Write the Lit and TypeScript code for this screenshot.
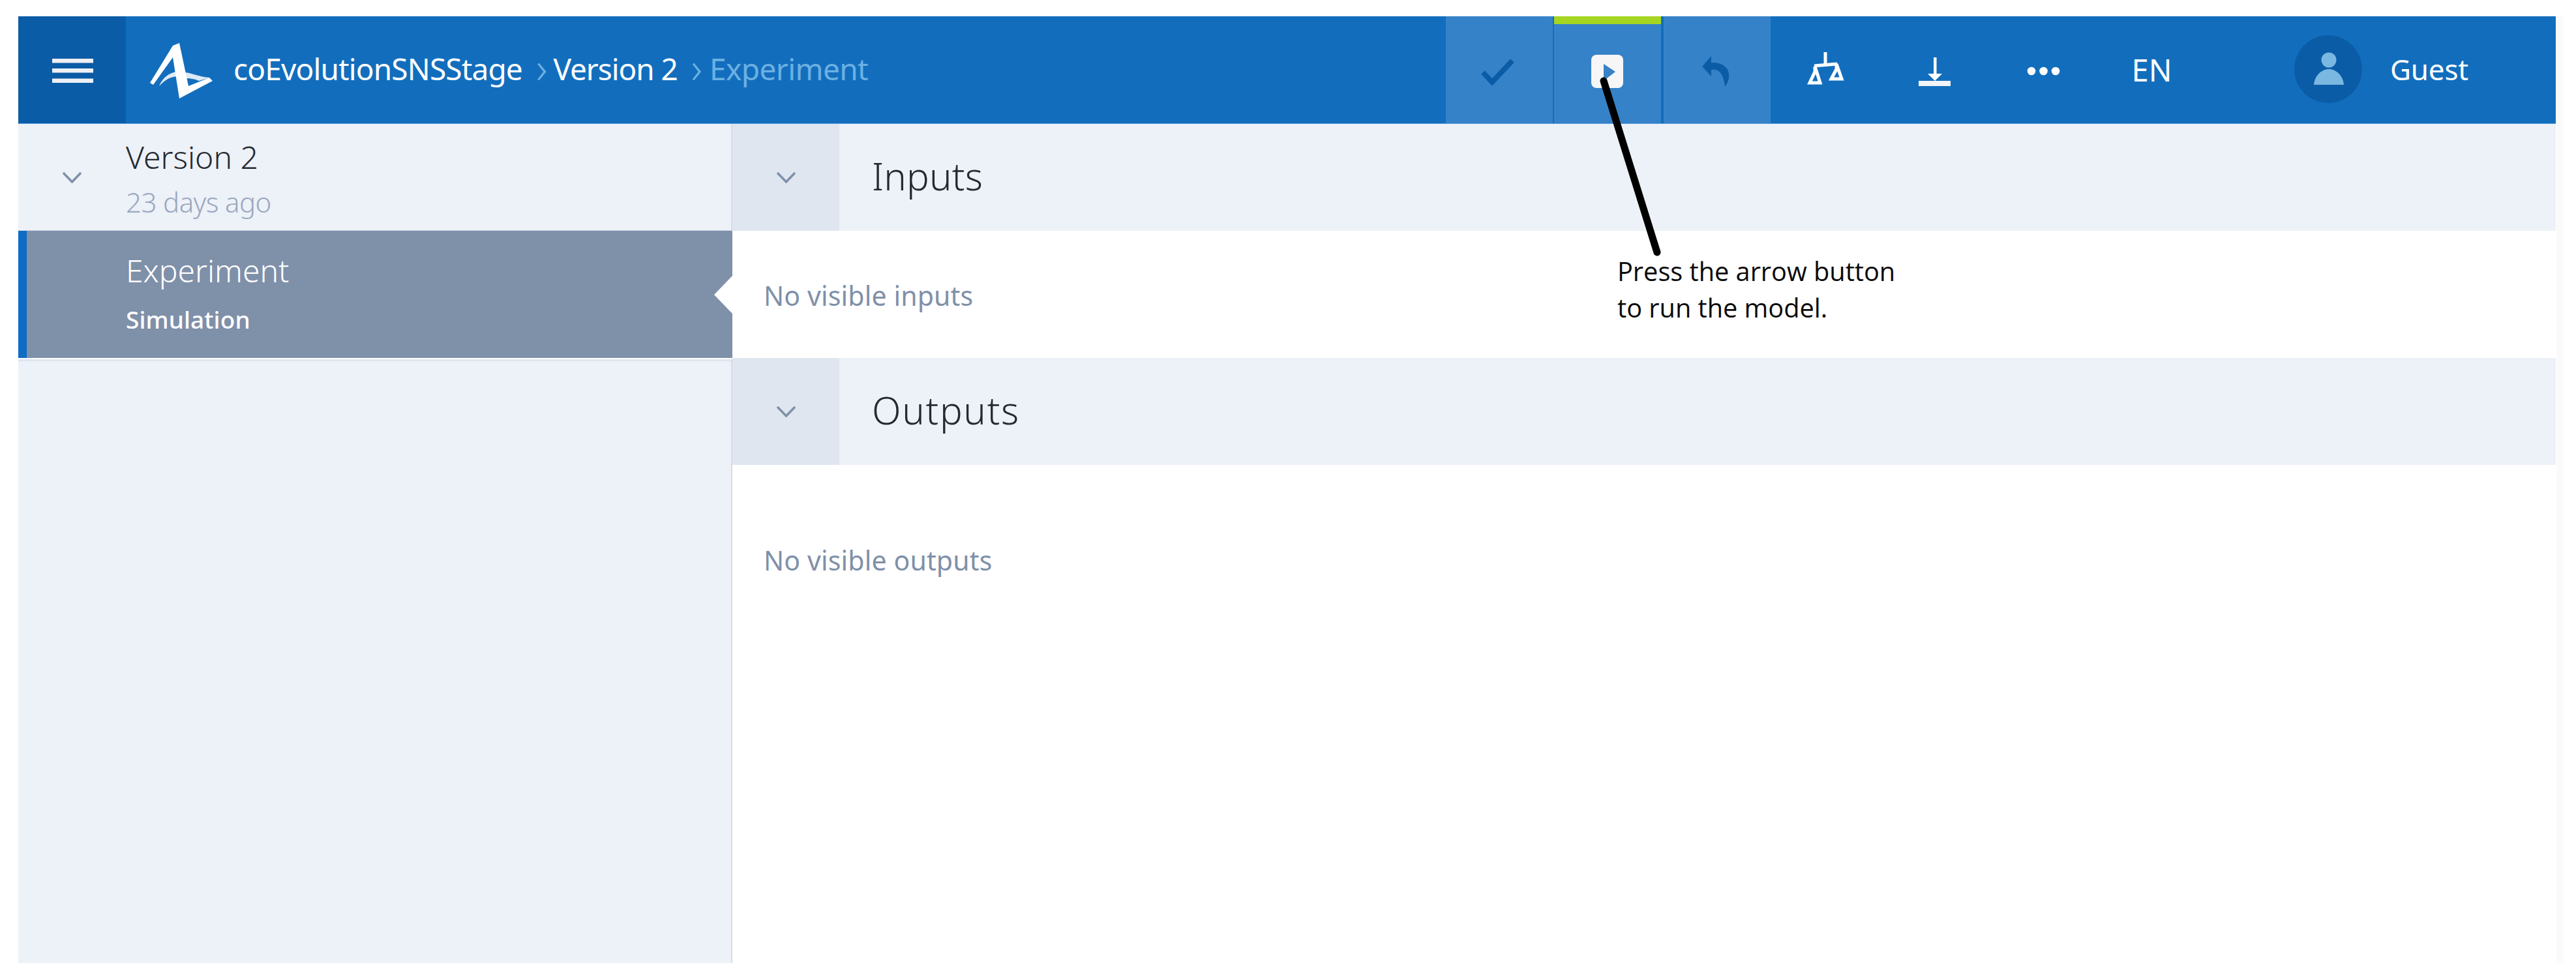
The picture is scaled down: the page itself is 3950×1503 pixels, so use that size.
import { LitElement, html, css, svg } from "lit";
import { customElement } from "lit/decorators.js";

const chevron = svg`<path d="M2 2 L15.5 16 L29 2" fill="none" stroke="#7f90a9" stroke-width="3.5"/>`;

@customElement("app-root")
export class AppRoot extends LitElement {
  static styles = css`
    :host {
      display: flex;
      box-sizing: border-box;
      width: 3950px;
      height: 1503px;
      padding: 25px 20px 26px 28px;
      background: #fff;
      font-family: "Noto Sans", sans-serif;
      position: relative;
      overflow: hidden;
    }
    .app { width: 3891px; display: flex; flex-direction: column; }
    .strip { width: 10px; margin-left: 1px; background: #fafafa; }
    .header {
      height: 165px; box-sizing: border-box; flex: none;
      background: #126ebd; border-bottom: 1px solid #4f97dc;
      display: flex; color: #fff;
    }
    .burger { width: 165px; background: #0b5ca6; flex: none; }
    .logo { width: 165px; flex: none; }
    .crumbs { display: flex; align-items: center; font-size: 46px; font-weight: 400; height: 160px; white-space: nowrap; }
    .app-name { letter-spacing: -0.85px; }
    .sep { color: #6cb0e2; font-size: 66px; line-height: 66px; margin: 0 9px 0 21px; font-weight: 300; padding-bottom: 6px; }
    .v { letter-spacing: -1.1px; }
    .cur { color: #6cb0e2; letter-spacing: -0.6px; margin-left: 2px; }
    .actions { margin-left: auto; display: flex; }
    .btn { width: 164px; flex: none; background: #3682c8; display: flex; }
    .btn.second { margin-left: 2px; box-shadow: inset 0 12px 0 #a6d521; }
    .btn.third { margin-left: 4px; }
    .tool { width: 167px; flex: none; display: flex; align-items: center; justify-content: center; }
    .tool svg, .btn svg { display: block; }
    .en { font-size: 47px; }
    .user { width: 536px; flex: none; display: flex; align-items: center; padding-left: 135px; box-sizing: border-box; padding-bottom: 2px; }
    .avatar { width: 104px; height: 104px; flex: none; }
    .guest { margin-left: 43px; font-size: 44px; letter-spacing: -0.2px; }
    .body { flex: 1; display: flex; min-height: 0; }
    .side { width: 1095px; flex: none; box-sizing: border-box; background: #edf1f8; border-right: 2px solid #d6dce6; }
    .ver { height: 164px; display: flex; box-sizing: border-box; border-bottom: 1px solid #ccd5e2; }
    .chev-slot { width: 165px; flex: none; display: flex; align-items: center; justify-content: center; }
    .chev-slot svg { display: block; }
    .ver-text { padding-top: 21px; }
    .ver-title { font-size: 48px; line-height: 60px; color: #262a30; letter-spacing: 0; font-weight: 300; }
    .ver-date { font-size: 42px; line-height: 56px; margin-top: 11px; color: #9aa8bf; font-weight: 300; letter-spacing: -0.6px; }
    .sel {
      height: 195px; box-sizing: border-box; background: #7f90a9; border-left: 13px solid #0f6cc4;
      color: #fff; padding: 31px 0 0 152px; margin-right: -2px; position: relative;
    }
    .sel-title { font-size: 48px; line-height: 60px; font-weight: 300; letter-spacing: 0; }
    .sel-sub { font-size: 37px; line-height: 50px; margin-top: 20px; font-weight: 500; letter-spacing: 0.1px; }
    .notch { position: absolute; right: 0; top: 69px; width: 28px; height: 58px; background: #fff; clip-path: polygon(100% 0, 0 50%, 100% 100%); }
    .after-sel { height: 2px; background: #fff; margin-right: -2px; }
    .after-line { height: 3px; background: #dfe5ef; }
    .main { flex: 1; min-width: 0; background: #fff; }
    .sec { height: 164px; display: flex; background: #edf1f8; box-sizing: border-box; }
    .sec-chev { width: 164px; flex: none; background: #dfe6ef; display: flex; align-items: center; justify-content: center; }
    .sec-title { margin-left: 50px; font-size: 58px; font-weight: 300; color: #262a30; align-self: center; padding-bottom: 6px; letter-spacing: 0.2px; }
    .sec-title.wide { letter-spacing: 1.7px; }
    .empty { font-size: 41px; color: #7f90a9; padding-left: 48px; letter-spacing: 0.15px; font-weight: 400; }
    .in { height: 195px; box-sizing: border-box; padding-top: 71px; line-height: 56px; }
    .out { padding-top: 118px; line-height: 56px; }
    .overlay { position: absolute; left: 0; top: 0; pointer-events: none; }
    .note {
      position: absolute; left: 2480px; top: 388px; color: #0a0a0a;
      font-family: "Open Sans", sans-serif; font-size: 39.7px; line-height: 56px; white-space: nowrap;
    }
  `;

  render() {
    return html`
      <div class="app">
        <div class="header">
          <div class="burger">
            <svg width="165" height="164" viewBox="28 25 165 164">
              <g fill="#eef0f4">
                <rect x="80" y="90" width="63" height="6.5"/>
                <rect x="80" y="105" width="63" height="6.5"/>
                <rect x="80" y="120.5" width="63" height="6.5"/>
              </g>
            </svg>
          </div>
          <div class="logo">
            <svg width="165" height="164" viewBox="193 25 165 164">
              <path d="M244 132 C249 120 259 111 272 110 L273 117 C262 117 252 123 244 132 Z" fill="#dce9f6"/>
              <path d="M283 111 C295 112 305 118 322 119 L305 124 C298 121 292 120 285 120 Z" fill="#dce9f6"/>
              <path d="M265 70 L275 66 L289 132 L321 119 L326 124 L275 151 L265 88 L235 130 L230 127 Z" fill="#fff"/>
            </svg>
          </div>
          <div class="crumbs">
            <span class="app-name">coEvolutionSNSStage</span>
            <span class="sep">›</span><span class="v">Version 2</span>
            <span class="sep">›</span><span class="cur">Experiment</span>
          </div>
          <div class="actions">
            <div class="btn">
              <svg width="164" height="164" viewBox="2216 25 164 164">
                <path d="M2273 111 L2287 126 L2318 93" fill="none" stroke="#0b5ca6" stroke-width="8"/>
              </svg>
            </div>
            <div class="btn second">
              <svg width="164" height="164" viewBox="2382 25 164 164">
                <rect x="2439" y="84" width="49" height="51" rx="8" fill="#f6f6f7"/>
                <path d="M2458 98 L2476 110 L2458 124 Z" fill="#3682c8"/>
              </svg>
            </div>
            <div class="btn third">
              <svg width="164" height="164" viewBox="2550 25 164 164">
                <path d="M2623 86 L2609 102 L2623 117 L2623 107 C2634 105 2642 112 2644 133 C2656 118 2652 95 2623 96 Z" fill="#0b5ca6"/>
              </svg>
            </div>
            <div class="tool">
              <svg width="167" height="164" viewBox="2714 25 167 164">
                <g fill="none" stroke="#fff" stroke-width="5">
                  <path d="M2798 80 L2798 98"/>
                  <path d="M2781 101 L2816 98"/>
                  <path d="M2782 102 L2782 110 L2774 127 L2790 127 Z" stroke-linejoin="miter"/>
                  <path d="M2815 98 L2815 106 L2807 121 L2823 121 Z" stroke-linejoin="miter"/>
                </g>
              </svg>
            </div>
            <div class="tool">
              <svg width="167" height="164" viewBox="2881 25 167 164">
                <rect x="2964" y="88" width="4.5" height="28" fill="#fff"/>
                <path d="M2955 113 L2977 113 L2966 124 Z" fill="#fff"/>
                <rect x="2941" y="124" width="49" height="8" fill="#f2f4f8"/>
              </svg>
            </div>
            <div class="tool">
              <svg width="167" height="164" viewBox="3048 25 167 164">
                <g fill="#fff">
                  <circle cx="3114" cy="109" r="6.3"/>
                  <circle cx="3132.5" cy="109" r="6.3"/>
                  <circle cx="3151" cy="109" r="6.3"/>
                </g>
              </svg>
            </div>
            <div class="tool en">EN</div>
            <div class="user">
              <svg class="avatar" viewBox="3518 55 104 104">
                <circle cx="3570" cy="107" r="52" fill="#0b5ca6"/>
                <ellipse cx="3571" cy="93" rx="11.5" ry="11.5" fill="#7ab8e2"/>
                <path d="M3548 131 C3549 117 3560 107 3571 107 C3582 107 3593 117 3594 131 Z" fill="#7ab8e2"/>
              </svg>
              <span class="guest">Guest</span>
            </div>
          </div>
        </div>
        <div class="body">
          <div class="side">
            <div class="ver">
              <div class="chev-slot"><svg width="31" height="18" viewBox="0 0 31 18">${chevron}</svg></div>
              <div class="ver-text">
                <div class="ver-title">Version 2</div>
                <div class="ver-date">23 days ago</div>
              </div>
            </div>
            <div class="sel">
              <div class="sel-title">Experiment</div>
              <div class="sel-sub">Simulation</div>
              <div class="notch"></div>
            </div>
            <div class="after-sel"></div>
            <div class="after-line"></div>
          </div>
          <div class="main">
            <div class="sec">
              <div class="sec-chev"><svg width="31" height="18" viewBox="0 0 31 18">${chevron}</svg></div>
              <div class="sec-title">Inputs</div>
            </div>
            <div class="empty in">No visible inputs</div>
            <div class="sec">
              <div class="sec-chev"><svg width="31" height="18" viewBox="0 0 31 18">${chevron}</svg></div>
              <div class="sec-title wide">Outputs</div>
            </div>
            <div class="empty out">No visible outputs</div>
          </div>
        </div>
      </div>
      <div class="strip"></div>
      <svg class="overlay" width="3950" height="1503" viewBox="0 0 3950 1503">
        <path d="M2459 124 L2541 387" stroke="#000" stroke-width="11" stroke-linecap="round" fill="none"/>
      </svg>
      <div class="note">Press the arrow button<br />to run the model.</div>
    `;
  }
}
